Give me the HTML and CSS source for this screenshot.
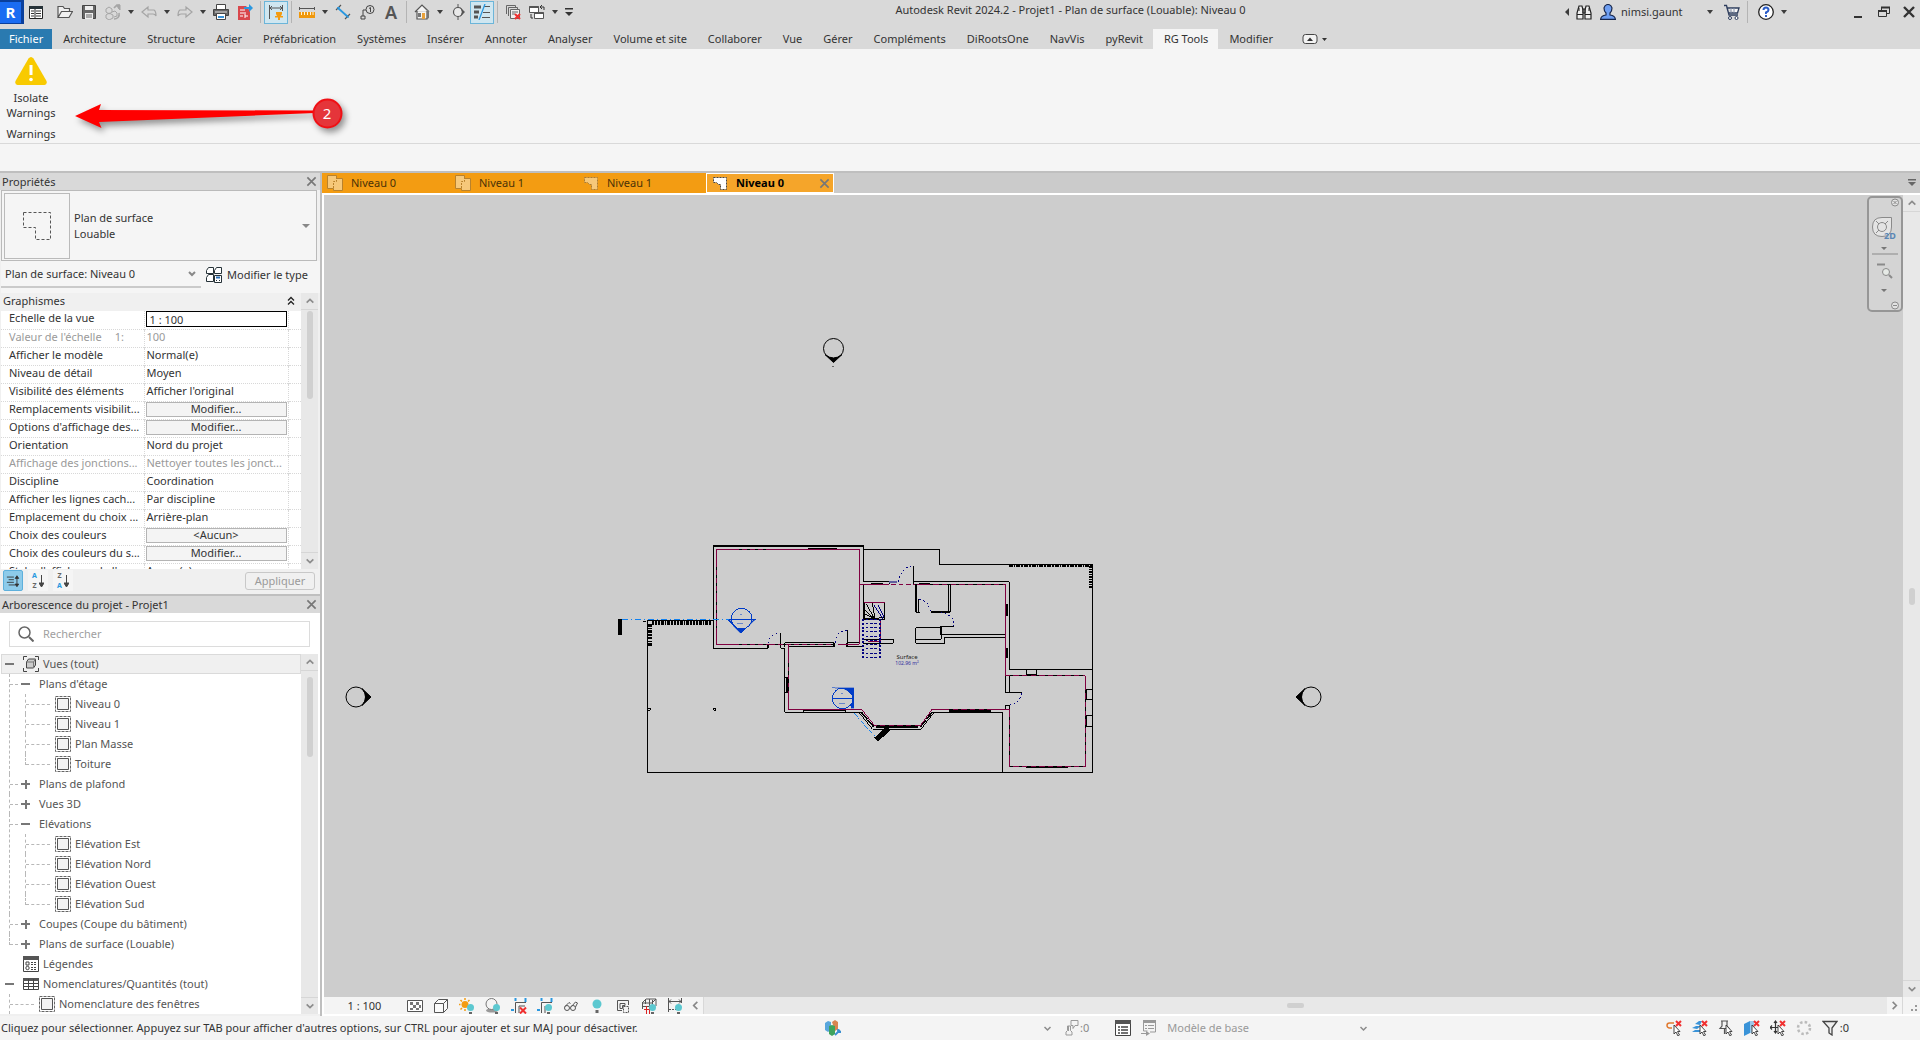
FILE: index.html
```html
<!DOCTYPE html>
<html lang="fr">
<head>
<meta charset="utf-8">
<title>Autodesk Revit 2024.2 - Projet1</title>
<link rel="stylesheet" href="styles.css">
</head>
<body>
<svg class="defs" aria-hidden="true">
  <symbol id="caret" viewBox="0 0 12 16"><path d="M3 6h6L6 10z" fill="#3c3c3c"/></symbol>
  <symbol id="x" viewBox="0 0 12 12"><path d="M1.500 1.500l9 9M10.500 1.500l-9 9" stroke="#777" stroke-width="1.800" fill="none"/></symbol>
  <symbol id="up" viewBox="0 0 12 12"><path d="M2 8l4-4 4 4" stroke="#8c8c8c" stroke-width="2" fill="none"/></symbol>
  <symbol id="down" viewBox="0 0 12 12"><path d="M2 4l4 4 4-4" stroke="#8c8c8c" stroke-width="2" fill="none"/></symbol>
  <symbol id="view" viewBox="0 0 16 16"><path d="M.5 .5h15v15H.5z" fill="none" stroke="#666" stroke-dasharray="3 1"/><path d="M2.500 2.500h11v11h-11z" fill="#f2f2f2" stroke="#555"/></symbol>
  <symbol id="bulb" viewBox="0 0 16 16"><circle cx="11.500" cy="9.500" r="3.500" fill="#5cc8d0"/><path d="M10 14h3v2h-3z" fill="#666"/></symbol>
  <symbol id="cursor" viewBox="0 0 16 16"><path d="M8 5v9l2-2 2 4 1.500-1-2-3.500H14z" fill="#fff" stroke="#333" stroke-width=".9"/></symbol>
  <symbol id="redx" viewBox="0 0 16 16"><path d="M10 1l5 5M15 1l-5 5" stroke="#f03030" stroke-width="2"/></symbol>
  <symbol id="sheet" viewBox="0 0 16 16"><path d="M.5 .5h9v3h6v12h-9v-2h-6z" fill="#f6c87a" stroke="#b9822c"/><path d="M6.500 13V6.500h3V3" fill="none" stroke="#b9822c" stroke-dasharray="2 1"/></symbol>
  <symbol id="area" viewBox="0 0 16 16"><path d="M1.500 2.500h13v12h-6v-5h-2l-2-2h-3z" stroke-dasharray="2 1"/></symbol>
</svg>

<header class="titlebar">
  <div class="tools">
    <button class="app" aria-label="Revit"><span>R</span></button>
    <button class="tool" aria-label="Accueil"><svg viewBox="0 0 16 16"><path d="M1.500 2.500h13v12h-13z" fill="#fff" stroke="#222"/><path d="M1 2h14v3H1z" fill="#263238"/><path d="M3 7h3M3 9.500h3M3 12h3M8 7h5M8 9.500h5M8 12h5" stroke="#333"/><path d="M7 5v9" stroke="#222"/></svg></button>
    <span class="space"></span>
    <button class="tool" aria-label="Ouvrir"><svg viewBox="0 0 16 16"><path d="M1 13.500v-11h5l1.500 2h5v3M1 13.500l3.500-6h11l-3.500 6z" fill="#f0f0f0" stroke="#555" stroke-width="1.200"/></svg></button>
    <button class="tool" aria-label="Enregistrer"><svg viewBox="0 0 16 16"><path d="M1.500 1.500h13v13h-13z" fill="#666" stroke="#444"/><path d="M4 2h8v4H4zM4 9h8v6H4z" fill="#eee"/><path d="M5 11h6M5 13h6" stroke="#666"/></svg></button>
    <button class="tool" aria-label="Synchroniser"><svg viewBox="0 0 16 16" fill="none" stroke="#a5a5a5"><path d="M1 5l3-2 3 2v3l-3 2-3-2zM1 11l3-2 4 2v3l-4 2-3-2zM7 8l3-1 2 2v3l-3 1"/><path d="M9 4c2-3 5-3 5-3v4M14 9c1 4-2 6-5 6" stroke-width="1.600"/><path d="M11 1h4v5z" fill="#a5a5a5"/></svg></button>
    <button class="drop" aria-label="Options de synchronisation"><svg><use href="#caret"/></svg></button>
    <button class="tool" aria-label="Annuler"><svg viewBox="0 0 16 16"><path d="M1 8l6-5v3h6q2 1 2 6-1-2-3-2H7v3z" fill="none" stroke="#a5a5a5" stroke-width="1.200"/></svg></button>
    <button class="drop" aria-label="Liste annuler"><svg><use href="#caret"/></svg></button>
    <button class="tool" aria-label="Rétablir"><svg viewBox="0 0 16 16"><path d="M15 8L9 3v3H3Q1 7 1 12q1-2 3-2h5v3z" fill="none" stroke="#a5a5a5" stroke-width="1.200"/></svg></button>
    <button class="drop" aria-label="Liste rétablir"><svg><use href="#caret"/></svg></button>
    <button class="tool" aria-label="Imprimer"><svg viewBox="0 0 16 16"><path d="M3.500 5V.5h9V5" fill="#fff" stroke="#444"/><path d="M.5 5.500h15v6H.5z" fill="#666" stroke="#444"/><path d="M3.500 9.500h9v6h-9z" fill="#fff" stroke="#444"/><path d="M2 8h12" stroke="#ddd"/><path d="M5 13h6" stroke="#3a93d8" stroke-width="2"/></svg></button>
    <button class="tool" aria-label="Exporter PDF"><svg viewBox="0 0 16 16"><path d="M1 2h8l4 5v9H1z" fill="#d9474c"/><path d="M3 6h5M3 9h6M3 12h3M8 12h3M8 10v4" stroke="#fff"/><path d="M7 3h5V0l4 4-4 4V5H7z" fill="#2a98e0"/></svg></button>
    <span class="sep"></span>
    <button class="tool on" aria-label="Cote alignée"><svg viewBox="0 0 16 16"><path d="M1.500 1v14M14.500 1v6M2 4h12M4 2L2 4l2 2M12 2l2 2-2 2" fill="none" stroke="#555"/><path d="M8 8h6v2l-1 2h2v1.500h-3V16h-2v-2.500H7V12h2l-1-2z" fill="#f39c12"/></svg></button>
    <span class="sep"></span>
    <button class="tool" aria-label="Mesurer"><svg viewBox="0 0 16 16"><path d="M.5 3v3M15.500 3v3M0 4.500h16" stroke="#555"/><path d="M0 8h16v6H0z" fill="#f0980c"/><path d="M2.500 8v3M5.500 8v3M8.500 8v3M11.500 8v3M14 8v3" stroke="#fff3d6"/></svg></button>
    <button class="drop" aria-label="Options de mesure"><svg><use href="#caret"/></svg></button>
    <button class="tool" aria-label="Cote"><svg viewBox="0 0 16 16"><path d="M3 4l10 9" stroke="#2a98e0" stroke-width="1.800"/><path d="M1 6l5-5M10 15l5-5" stroke="#555" stroke-width="1.200"/><path d="M2 3l3 0-2 3zM14 14l-3-1 2-2z" fill="#2a98e0"/></svg></button>
    <button class="tool" aria-label="Étiquette"><svg viewBox="0 0 16 16" fill="none" stroke="#444"><circle cx="11" cy="5.500" r="4"/><path d="M7 6H4v6M2 12h4v3H2zM10 4.500l1.500-1V8"/></svg></button>
    <button class="tool letter" aria-label="Texte">A</button>
    <span class="sep"></span>
    <button class="tool" aria-label="Vue 3D"><svg viewBox="0 0 16 16"><path d="M1 8l7-7 7 7M3 7v8h10V7" fill="#f4f4f4" stroke="#555" stroke-width="1.200"/><path d="M8 9h3v6H8z" fill="#e9a23b"/><path d="M4 9h3v4H4zM10 2l5 5v7l-2 1V6z" fill="#777"/></svg></button>
    <button class="drop" aria-label="Options 3D"><svg><use href="#caret"/></svg></button>
    <button class="tool" aria-label="Coupe"><svg viewBox="0 0 16 16"><circle cx="8" cy="8" r="4.500" fill="#e9e9e9" stroke="#555" stroke-width="1.200"/><path d="M8 0v4M8 12v4" stroke="#555"/><path d="M10 3l5 5-5 5 2-5z" fill="#555"/></svg></button>
    <button class="tool on" aria-label="Lignes fines"><svg viewBox="0 0 16 16"><path d="M0 3h7M0 8h5M0 13h4" stroke="#555" stroke-width="3"/><path d="M10 2.500h6M9 8.500h7M8 13.500h8" stroke="#555"/><path d="M11 0L5 16" stroke="#2a98e0" stroke-width="1.300"/></svg></button>
    <span class="sep"></span>
    <button class="tool" aria-label="Fermer les vues inactives"><svg viewBox="0 0 16 16"><path d="M1.500 10V1.500h9V3M3.500 12V3.500h9V5" fill="none" stroke="#666"/><path d="M5.500 5.500h9v9h-9z" fill="#f0f0f0" stroke="#666"/><path d="M7 8h6M7 10h3" stroke="#666"/><path d="M10 10l5 5M15 10l-5 5" stroke="#f03030" stroke-width="2"/></svg></button>
    <button class="tool" aria-label="Changer de fenêtre"><svg viewBox="0 0 16 16"><path d="M.5 2.500h9v6h-9z" fill="#fff" stroke="#555"/><path d="M.5 3h9" stroke="#555" stroke-width="2"/><path d="M5.500 8.500h9v6h-9z" fill="#fff" stroke="#555"/><path d="M5.500 9h9" stroke="#555" stroke-width="2"/><path d="M11 3h4v3M2 10v4h2M13 1l-2 2 2 2" fill="none" stroke="#333"/></svg></button>
    <button class="drop" aria-label="Liste des fenêtres"><svg><use href="#caret"/></svg></button>
    <button class="tool narrow" aria-label="Personnaliser"><svg viewBox="0 0 16 16"><path d="M4 4h8v1.500H4zM4 8h8l-4 4z" fill="#333"/></svg></button>
  </div>
  <div class="title">Autodesk Revit 2024.2 - Projet1 - Plan de surface (Louable): Niveau 0</div>
  <div class="account">
    <button class="drop" aria-label="Réduire"><svg viewBox="0 0 12 16"><path d="M9 4v8L5 8z" fill="#3c3c3c"/></svg></button>
    <button class="tool" aria-label="Rechercher"><svg viewBox="0 0 16 16"><path d="M3 2h3l1 4v9H1V9zM13 2h-3L9 6v9h6V9z" fill="#eee" stroke="#222" stroke-width="1.200"/><path d="M1 10.500h6M9 10.500h6M7 5h2v4H7zM3 4v3M13 4v3" fill="#888" stroke="#222"/></svg></button>
    <button class="user"><svg viewBox="0 0 16 16"><path d="M.6 15.400Q1 11.500 6 11V9Q4 7 4 4q1-3.500 4-3.500T12 4q0 3-2 5v2q5 .5 5.400 4.400z" fill="#6f9ff2" stroke="#16264c" stroke-width="1.200"/></svg>nimsi.gaunt</button>
    <button class="drop" aria-label="Compte"><svg><use href="#caret"/></svg></button>
    <button class="tool cart" aria-label="Boutique"><svg viewBox="0 0 16 16"><path d="M0 1.500h2.500L5 11h9M3 4h12l-1.500 5H4.500z" fill="#f6f6f6" stroke="#2d3c5c" stroke-width="1.300"/><path d="M7 4v5M10 4v5" stroke="#8390aa"/><circle cx="6" cy="14" r="1.500" fill="#fff" stroke="#2d3c5c"/><circle cx="12.500" cy="14" r="1.500" fill="#fff" stroke="#2d3c5c"/></svg></button>
    <span class="sep"></span>
    <button class="tool help" aria-label="Aide"><svg viewBox="0 0 16 16"><circle cx="8" cy="8" r="7.300" fill="#fff" stroke="#222" stroke-width="1.300"/><path d="M5.500 6q0-2.500 2.500-2.500T10.500 6Q10.500 7.500 8 8.500v1.500M8 11v2" fill="none" stroke="#2a5cc8" stroke-width="2"/></svg></button>
    <button class="drop" aria-label="Menu aide"><svg><use href="#caret"/></svg></button>
  </div>
  <div class="winbtns">
    <button aria-label="Réduire"><svg viewBox="0 0 12 12"><path d="M1 10h8v2H1z" fill="#333"/></svg></button>
    <button aria-label="Restaurer"><svg viewBox="0 0 12 12"><path d="M3.500 4V1.500h8v6H9M.5 4.500h8v6h-8z" fill="none" stroke="#333"/><path d="M3 1.500h9M0 5h9" stroke="#333" stroke-width="2"/></svg></button>
    <button aria-label="Fermer"><svg viewBox="0 0 12 12"><path d="M1 1l10 10M11 1L1 11" stroke="#333" stroke-width="2.400"/></svg></button>
  </div>
</header>

<nav class="menu">
  <button class="file">Fichier</button><button>Architecture</button><button>Structure</button><button>Acier</button><button>Préfabrication</button><button>Systèmes</button><button>Insérer</button><button>Annoter</button><button>Analyser</button><button>Volume et site</button><button>Collaborer</button><button>Vue</button><button>Gérer</button><button>Compléments</button><button>DiRootsOne</button><button>NavVis</button><button>pyRevit</button><button class="current">RG Tools</button><button>Modifier</button>
  <button class="collapse" aria-label="Réduire le ruban"><svg viewBox="0 0 26 12"><rect x="1" y="1.500" width="14" height="9" rx="2.500" fill="#f2f2f2" stroke="#444"/><path d="M5 8h6L8 4.500zM20 5h5l-2.500 3z" fill="#333"/></svg></button>
</nav>

<section class="ribbon">
  <div class="panel">
    <button class="big"><svg viewBox="0 0 32 28"><path d="M13.500 1.500q2.500-3 5 0L31.500 24q1 3.500-2 4h-27q-3-.5-2-4z" fill="#f8ca00"/><path d="M16 8v10" stroke="#fff" stroke-width="3"/><circle cx="16" cy="22.500" r="1.800" fill="#fff"/></svg><span>Isolate<br>Warnings</span></button>
    <div class="caption">Warnings</div>
  </div>
  <svg class="callout" viewBox="0 0 290 50"><g filter="drop-shadow(3px 4px 3px #0006)"><path d="M5 27L31 15l-2 6 216 .5v2.500L29 33l2.500 6z" fill="#f00"/><circle cx="257.500" cy="24.500" r="14" fill="#e5353a" stroke="#f01015" stroke-width="2"/></g><text x="257" y="30">2</text></svg>
</section>
<div class="options"></div>

<main>
  <aside>
    <section class="props">
      <header class="dockhead"><h2>Propriétés</h2><button aria-label="Fermer Propriétés"><svg><use href="#x"/></svg></button></header>
      <button class="type">
        <span class="thumb"><svg viewBox="0 0 30 30"><path d="M1.500 1.500h27v27h-15v-12h-12z" fill="none" stroke="#555" stroke-dasharray="3 2"/></svg></span>
        <span class="typename">Plan de surface<br>Louable</span>
        <svg class="tri" viewBox="0 0 8 4"><path d="M0 0h8L4 4z" fill="#888"/></svg>
      </button>
      <div class="filter">
        <button class="instance"><span>Plan de surface: Niveau 0</span><svg viewBox="0 0 12 12"><path d="M3 4l3 3 3-3" fill="none" stroke="#888" stroke-width="2"/></svg></button>
        <button class="edit"><svg viewBox="0 0 16 16" fill="#fff" stroke="#263238"><path d="M.5 3.500l2-3h5v6h-7zM8.500 3.500l2-3h5v6h-7zM.5 10.500l2-3h5v7h-7z"/><path d="M8.500 8.500h7v7h-7z"/><path d="M10 10.500h4" stroke="#2a6fb5" stroke-width="2"/><path d="M10 13.500h1M13 13.500h1"/></svg>Modifier le type</button>
      </div>
      <div class="scrollrow grid">
        <div class="clip">
          <div class="group"><span>Graphismes</span><svg viewBox="0 0 8 10"><path d="M1 4.500l3-3 3 3M1 8.500l3-3 3 3" fill="none" stroke="#222" stroke-width="1.300"/></svg></div>
          <table>
            <tr><th><label for="scale">Echelle de la vue</label></th><td class="field"><input id="scale" value="1 : 100"></td><td></td></tr>
            <tr class="off"><th>Valeur de l'échelle<span class="unit">1:</span></th><td>100</td><td></td></tr>
            <tr><th>Afficher le modèle</th><td>Normal(e)</td><td></td></tr>
            <tr><th>Niveau de détail</th><td>Moyen</td><td></td></tr>
            <tr><th>Visibilité des éléments</th><td>Afficher l'original</td><td></td></tr>
            <tr><th>Remplacements visibilit...</th><td class="field"><button>Modifier...</button></td><td></td></tr>
            <tr><th>Options d'affichage des...</th><td class="field"><button>Modifier...</button></td><td></td></tr>
            <tr><th>Orientation</th><td>Nord du projet</td><td></td></tr>
            <tr class="off"><th>Affichage des jonctions...</th><td>Nettoyer toutes les jonct...</td><td></td></tr>
            <tr><th>Discipline</th><td>Coordination</td><td></td></tr>
            <tr><th>Afficher les lignes cach...</th><td>Par discipline</td><td></td></tr>
            <tr><th>Emplacement du choix ...</th><td>Arrière-plan</td><td></td></tr>
            <tr><th>Choix des couleurs</th><td class="field"><button>&lt;Aucun&gt;</button></td><td></td></tr>
            <tr><th>Choix des couleurs du s...</th><td class="field"><button>Modifier...</button></td><td></td></tr>
            <tr><th>Style d'affichage de l'...</th><td>Aucun(e)</td><td></td></tr>
          </table>
        </div>
        <div class="vbar"><button aria-label="Haut"><svg><use href="#up"/></svg></button><i class="t1"></i><button aria-label="Bas"><svg><use href="#down"/></svg></button></div>
      </div>
      <div class="sorts">
        <button class="sel" aria-label="Trier par catégorie"><svg viewBox="0 0 16 16"><path d="M1 3.500h8M3 6.500h6M1 9.500h8M3 12.500h8" stroke="#333"/><path d="M12.500 4v9M10.500 5l2-3 2 3zM10.500 11.500l2 3 2-3z" fill="#333" stroke="#333"/></svg></button>
        <button aria-label="Tri croissant"><span class="az"><b>A</b><b>Z</b></span><svg viewBox="0 0 5 14"><path d="M2.500 1v10M0 9h5L2.500 13z" fill="#444" stroke="#444"/></svg></button>
        <button aria-label="Tri décroissant"><span class="az za"><b>Z</b><b>A</b></span><svg viewBox="0 0 5 14"><path d="M2.500 1v10M0 9h5L2.500 13z" fill="#444" stroke="#444"/></svg></button>
        <button class="apply" disabled>Appliquer</button>
      </div>
    </section>

    <section class="browser">
      <header class="dockhead"><h2>Arborescence du projet - Projet1</h2><button aria-label="Fermer Arborescence"><svg><use href="#x"/></svg></button></header>
      <label class="search"><svg viewBox="0 0 16 16"><circle cx="6.500" cy="6.500" r="5.500" fill="none" stroke="#666" stroke-width="1.500"/><path d="M11 11l4.500 4.500" stroke="#666" stroke-width="2"/></svg><input placeholder="Rechercher" aria-label="Rechercher"></label>
      <div class="scrollrow">
        <div class="clip">
          <ul class="tree">
            <li><div class="row root hot"><i class="tg minus"></i><svg viewBox="0 0 16 16" fill="none" stroke="#444"><path d="M4 .5H.5V4M12 .5h3.500V4M4 15.500H.5V12M12 15.500h3.500V12"/><path d="M3.500 6l2-3h7v6l-2 3h-7z" fill="#ccc"/><path d="M3.500 6h7v6M10.500 6l2-3" stroke="#777"/></svg>Vues (tout)</div>
              <ul>
                <li><div class="row"><i class="tg minus"></i>Plans d'étage</div>
                  <ul class="leafs">
                    <li><div class="row"><svg><use href="#view"/></svg>Niveau 0</div></li>
                    <li><div class="row"><svg><use href="#view"/></svg>Niveau 1</div></li>
                    <li><div class="row"><svg><use href="#view"/></svg>Plan Masse</div></li>
                    <li><div class="row"><svg><use href="#view"/></svg>Toiture</div></li>
                  </ul></li>
                <li><div class="row"><i class="tg plus"></i>Plans de plafond</div></li>
                <li><div class="row"><i class="tg plus"></i>Vues 3D</div></li>
                <li><div class="row"><i class="tg minus"></i>Elévations</div>
                  <ul class="leafs">
                    <li><div class="row"><svg><use href="#view"/></svg>Elévation Est</div></li>
                    <li><div class="row"><svg><use href="#view"/></svg>Elévation Nord</div></li>
                    <li><div class="row"><svg><use href="#view"/></svg>Elévation Ouest</div></li>
                    <li><div class="row"><svg><use href="#view"/></svg>Elévation Sud</div></li>
                  </ul></li>
                <li><div class="row"><i class="tg plus"></i>Coupes (Coupe du bâtiment)</div></li>
                <li><div class="row"><i class="tg plus"></i>Plans de surface (Louable)</div></li>
              </ul></li>
            <li><div class="row root"><i class="tg"></i><svg viewBox="0 0 16 16"><path d="M.5 .5h15v15H.5z" fill="#fff" stroke="#444"/><path d="M0 0h16v4H0z" fill="#555"/><path d="M3 6h3v3H3z" fill="none" stroke="#444"/><circle cx="4.500" cy="12" r="1.700" fill="none" stroke="#444"/><path d="M8 6.500h6M8 8.500h6M8 11.500h6M8 13.500h6" stroke="#444" stroke-dasharray="2 1"/></svg>Légendes</div></li>
            <li><div class="row root"><i class="tg minus"></i><svg viewBox="0 0 16 16"><path d="M.5 2.500h15v11H.5z" fill="#fff" stroke="#444"/><path d="M0 2h16v3H0z" fill="#555"/><path d="M0 7.500h16M0 10.500h16M5.500 3v11M10.500 3v11" stroke="#444"/></svg>Nomenclatures/Quantités (tout)</div>
              <ul class="leafs near"><li><div class="row"><svg><use href="#view"/></svg>Nomenclature des fenêtres</div></li><li><div class="row"></div></li></ul></li>
          </ul>
        </div>
        <div class="vbar"><button aria-label="Haut"><svg><use href="#up"/></svg></button><i class="t2"></i><button aria-label="Bas"><svg><use href="#down"/></svg></button></div>
      </div>
    </section>
  </aside>

  <section class="work">
    <div class="docs">
      <button class="doc"><svg><use href="#sheet"/></svg>Niveau 0</button>
      <button class="doc"><svg><use href="#sheet"/></svg>Niveau 1</button>
      <button class="doc dim"><svg fill="#f6c87a" stroke="#a87a35"><use href="#area"/></svg>Niveau 1</button>
      <button class="doc active"><svg fill="#fff" stroke="#444"><use href="#area"/></svg>Niveau 0<svg class="cl"><use href="#x"/></svg></button>
      <button class="more" aria-label="Liste des onglets"><svg viewBox="0 0 8 8"><path d="M0 0h8v1.500H0zM0 3h8L4 7z" fill="#666"/></svg></button>
    </div>
    <div class="viewport">
      <div class="canvas">
        <svg class="plan" viewBox="324 195 1579 802" preserveAspectRatio="xMinYMin slice" fill="none" stroke="#000" shape-rendering="crispEdges">
          <g shape-rendering="auto">
            <circle cx="833.500" cy="348.500" r="10"/><path d="M825 354.500l8.500 8 8.500-8q-8.500 7-17 0z" fill="#000"/><path d="M833 366v1"/>
            <circle cx="356" cy="697" r="10"/><path d="M362 688.500l9 8.500-9 8.500q7-8.500 0-17z" fill="#000"/>
            <circle cx="1311" cy="697" r="10"/><path d="M1305 688.500l-9 8.500 9 8.500q-7-8.500 0-17z" fill="#000"/>
          </g>
          <g transform="translate(600 530) scale(.333333)" stroke-width="3">
            <path d="M340 47v308h165v-12M340 47h450v107" />
            <path d="M340 47h452" stroke-width="6"/>
            <path d="M624 57h87" stroke-width="6"/>
            <path d="M60 267v48" stroke-width="12"/>
            <path d="M142 271h198M142 271v456h1336M130 276h8v-4"/>
            <path d="M156 278h177" stroke-width="12" stroke-dasharray="5 3 8 3"/>
            <path d="M150 282v68" stroke-width="12" stroke-dasharray="8 4 4 3"/>
            <path d="M142 535h9v6h-9M341 535h7v6h-7z"/>
            <path d="M542 308v47h12v192h223M554 350v-12h149v11H566M742 300v49h48M742 338h37"/>
            <path d="M505 343v12M542 343v12M703 338v12M741 338v12" stroke-width="5"/>
            <path d="M554 442h8v46h-8M612 541h125v6H612z"/><path d="M562 442v46" stroke-width="6"/>
            <path d="M612 541h125" stroke-width="5"/>
            <path d="M349 58v285h210M349 58h429v285H714M565 343h138M565 343v195h218M565 343h-40" stroke="#800040"/>
            <path d="M349 110v80M349 215v80M778 110v80M778 215v80M416 58h90M416 343h90M565 400v90M525 343h178" stroke-dasharray="10 14"/>
            <g stroke="#003cc8"><circle cx="425" cy="266" r="31"/><path d="M378 268h90"/><path d="M382 269l40 41 44-41-11 5q-10 22-31 24-22-1-29-24zM697 473h65v62h-8v-12q10-18 0-30-17-20-40-18z" fill="#003cc8" stroke-width="1"/><circle cx="728" cy="505" r="31"/><path d="M697 505h62"/><path d="M420 253h6M411 281h18M723 490h6M717 520h18" stroke-opacity=".5"/></g>
            <path d="M66 268h320M763 549l16 17M792 584l24 25" stroke="#1080f0" stroke-dasharray="18 9 3 9"/>
            <path d="M505 340q3-27 36-33M705 338q3-36 36-37" stroke="#000080" stroke-dasharray="5 8"/>
          </g>
          <g transform="translate(850 530) scale(.333333)" stroke-width="3">
            <path d="M40 58h228v45h459v624M40 47v107h78v8M190 107v54M190 155h288v263h249M457 547v180M41 165v52"/>
            <path d="M476 107h252" stroke-width="7" stroke-dasharray="12 3 5 3"/><path d="M722 107v70" stroke-width="10" stroke-dasharray="6 3 3 3"/>
            <path d="M198 163v84h12M206 208v38M296 163v84M301 163v84M302 313h164M271 248h30"/>
            <path d="M198 163v84M243 246h58M64 161h34M207 161h33" stroke-width="6"/>
            <path d="M197 293h77v35h-77M197 293v47h87v-18h182M274 313h28M271 290h42M271 290v23"/>
            <path d="M197 293h77M197 293v35M274 290v25" stroke-width="5"/>
            <path d="M472 223v36M472 355v30" stroke-width="7"/><path d="M478 223v36M478 355v30M478 437v50h-12v-50M472 487h43M466 538v-12h12v12M529 419v14h31v-14M727 478h-18v30h18M727 556h-18v33h18"/>
            <path d="M252 547h206M0 547h27l41 51h145l39-51M298 541h124v5H298z"/>
            <path d="M78 591h125" stroke-width="8"/><path d="M33 546l38 44M247 546l-36 44" stroke-dasharray="28 4" stroke-width="5"/>
            <path d="M78 629l38-34" stroke-width="16"/>
            <path d="M529 711h125" stroke-width="5"/>
            <path d="M0 58h28v285H0M28 163h90M202 163h264v275M466 437h240v273H479V538H246l-34 48H73l-38-48H0M40 217h64v51M91 268v66H55" stroke="#800040"/>
            <path d="M124 163h70" stroke="#800040" stroke-dasharray="14 8"/>
            <path d="M118 157h22" stroke="#6060a0" stroke-width="6"/>
            <path d="M240 163h220M480 437h220M706 480v200M479 560v130M298 538h124M480 710h220M80 586h125" stroke-dasharray="10 16"/>
            <path d="M40 217v51h64v-48M40 265h34l28-2M72 265l-30-28M72 265l-30-14M72 265l-22-43M75 265l-8-45M40 328h90v12H40M66 268v-5"/><path d="M42 220v48" stroke-width="5"/>
            <path d="M72 226l27 40M84 224l19 38" stroke="#000080"/>
            <path d="M145 155q8-42 45-49M208 208q28 4 34 38M272 248q42 6 39 40M479 524q34-5 35-36" stroke="#000080" stroke-dasharray="5 7"/>
            <path d="M40 268v116M91 268v116" stroke="#000080" stroke-width="7" stroke-dasharray="6 5"/>
            <path d="M47 270h42M47 281h42M47 293h42M47 306h42M47 319h42M47 333h42M47 345h42M47 357h42M47 370h42M47 382h42" stroke="#000080" stroke-dasharray="8 5"/>
            <path d="M12 549l66 74" stroke="#1080f0" stroke-dasharray="12 10 3 9"/>
          </g>
          <text x="907" y="659">Surface</text><text class="m2" x="907" y="665">102.96 m²</text>
        </svg>
        <div class="navbar">
          <svg viewBox="0 0 36 116">
            <rect x="1" y="1" width="34" height="114" rx="4" fill="#d4d4d4" stroke="#969696" stroke-width="2"/>
            <g fill="none" stroke="#8a8a8a"><circle cx="28" cy="6.500" r="3.500" fill="#e2e2e2"/><path d="M26.500 5l3 3M29.500 5l-3 3"/><circle cx="28" cy="109.500" r="3.500" fill="#e2e2e2"/><path d="M26 109.500h4"/><path d="M15 21.500h9.500V31q0 9.500-9.500 9.500T5.500 31 15 21.500z" fill="#e4e4e4"/><circle cx="15" cy="31" r="4.500"/><path d="M9 37l3-3M18 28l3-3M9 25l3 3M5 58h26"/><path d="M10 68.500h8" stroke-width="2"/><circle cx="19" cy="76" r="3.500" fill="#e6eae6"/><path d="M22 79l3 3" stroke-width="2"/></g>
            <path d="M14 51h6l-3 3zM14 93h6l-3 3z" fill="#777"/>
            <text x="17" y="43">2D</text>
          </svg>
        </div>
      </div>
      <div class="vbar"><button aria-label="Haut"><svg><use href="#up"/></svg></button><i class="t3"></i><button aria-label="Bas"><svg><use href="#down"/></svg></button></div>
    </div>
    <div class="viewbar">
      <button class="ratio">1 : 100</button>
      <div class="viewicons">
        <button aria-label="Niveau de détail"><svg viewBox="0 0 16 16"><path d="M.5 2.500h15v11H.5z" fill="#fff" stroke="#555"/><path d="M3 4h3v3H3zM9 4h3v3H9zM6 7h3v3H6zM12 7h2v3h-2zM3 10h3v2H3zM9 10h3v2H9z" fill="#777"/></svg></button>
        <button aria-label="Style visuel"><svg viewBox="0 0 16 16"><path d="M1.500 5.500h9v9h-9zM1.500 5.500l4-4h9v9l-4 4M10.500 5.500l4-4" fill="#fafafa" stroke="#555"/></svg></button>
        <button aria-label="Soleil"><svg viewBox="0 0 16 16"><circle cx="6" cy="6.500" r="3.500" fill="#f39c12"/><path d="M6 0v2M6 11v2M0 6.500h1.500M1.500 2l1.500 1.500M10.500 2L9 3.500M1.500 11.500L3 10" stroke="#f39c12" stroke-width="1.500"/><use href="#bulb"/></svg></button>
        <button aria-label="Ombres"><svg viewBox="0 0 16 16"><ellipse cx="7" cy="12.500" rx="6" ry="2" fill="#999"/><circle cx="6.500" cy="6" r="5.500" fill="#f4f4f4" stroke="#777"/><use href="#bulb"/></svg></button>
        <button aria-label="Cadrage"><svg viewBox="0 0 16 16"><path d="M4.500 15V4.500H15M8 15V8h6" fill="none" stroke="#555"/><path d="M0 12h3M4.500 0v3M14.500 0v4" stroke="#2a98e0" stroke-width="2"/><path d="M9 9.500l6 6M15 9.500l-6 6" stroke="#f03030" stroke-width="2"/></svg></button>
        <button aria-label="Zone cadrée"><svg viewBox="0 0 16 16"><path d="M4.500 15V4.500H15M8 15V8" fill="none" stroke="#555"/><path d="M0 12h3M4.500 0v3M14.500 0v4" stroke="#2a98e0" stroke-width="2"/><use href="#bulb"/></svg></button>
        <button aria-label="Masquer temporairement"><svg viewBox="0 0 16 16" fill="none" stroke="#555"><circle cx="4" cy="10" r="2.500"/><circle cx="10" cy="10" r="2.500"/><path d="M2 8.500l4-4 1.500 1M12.500 9l2-4-2-1-4 4.500"/></svg></button>
        <button aria-label="Éléments cachés"><svg viewBox="0 0 16 16"><circle cx="8" cy="6" r="4.500" fill="#5cc8d0"/><path d="M6.500 12h3v3h-3z" fill="#666"/></svg></button>
        <button aria-label="Propriétés temporaires"><svg viewBox="0 0 16 16" fill="none" stroke="#555"><path d="M13.500 7V2.500h-11v10H7"/><path d="M5 5.500h5v2H7.500v3H5z"/><path d="M8.500 8.500h5v6h-5z" stroke-dasharray="2 1"/></svg></button>
        <button aria-label="Modèle analytique"><svg viewBox="0 0 16 16"><path d="M1 5l4-4h10v7M1 5h10l4-4M1.500 5v6M4.500 1v5M8.500 1v7M11.500 2v5M2 8.500h8" fill="none" stroke="#555"/><path d="M5.500 8v8M8.500 8v8M3 11.500h6" stroke="#d22"/><use href="#bulb"/></svg></button>
        <button aria-label="Contraintes"><svg viewBox="0 0 16 16"><path d="M1.500 0v14M14.500 0v5M2 3.500h12M4 1.500l-2 2 2 2M12 1.500l2 2-2 2" fill="none" stroke="#555"/><path d="M2 11.500h8" stroke="#555" stroke-dasharray="2 1"/><use href="#bulb"/></svg></button>
      </div>
      <button class="arrow" aria-label="Gauche"><svg viewBox="0 0 12 12"><path d="M8 2L4 6l4 4" fill="none" stroke="#888" stroke-width="1.800"/></svg></button>
      <div class="track"><i></i></div>
      <button class="arrow" aria-label="Droite"><svg viewBox="0 0 12 12"><path d="M4 2l4 4-4 4" fill="none" stroke="#888" stroke-width="1.800"/></svg></button>
      <svg class="grip" viewBox="0 0 17 17"><path d="M12 8h2v2h-2zM12 12h2v2h-2zM8 12h2v2H8z" fill="#999"/></svg>
    </div>
  </section>
</main>

<footer>
  <span class="msg">Cliquez pour sélectionner. Appuyez sur TAB pour afficher d'autres options, sur CTRL pour ajouter et sur MAJ pour désactiver.</span>
  <button class="sets" aria-label="Sous-projets"><svg viewBox="0 0 16 16"><path d="M0 3l3-2 3 1v8l-3 2-3-2z" fill="#58a6dc"/><path d="M7 2l3-2 3 2v7l-3 2z" fill="#d98450"/><path d="M4 6l3-1 3 1v8l-3 2-3-2z" fill="#3fa35c"/><path d="M10 15l5-5M13 9v3h3" fill="none" stroke="#3a8fd0" stroke-width="1.800"/></svg></button>
  <button class="chev" aria-label="Sous-projet actif"><svg><use href="#down"/></svg></button>
  <button class="req"><svg viewBox="0 0 16 16" fill="none" stroke="#999"><path d="M8 .5h7v5h-3l-2 3v-3H8zM5.500 6v5M3 15V12l1.500-1.500V6h3v4.500L9 12v3z"/></svg>:0</button>
  <button class="opt" aria-label="Variantes"><svg viewBox="0 0 16 16"><path d="M.5 .5h15v15H.5z" fill="#fff" stroke="#444"/><path d="M0 0h16v4H0z" fill="#555"/><path d="M3 7h2M3 10h2M3 13h2M6 7h7M6 10h7M6 13h7" stroke="#444" stroke-width="1.300"/></svg></button>
  <button class="opt" aria-label="Ajouter à la variante"><svg viewBox="0 0 16 16"><path d="M2.500 1v10h4M14.500 1v11H9" fill="none" stroke="#999"/><path d="M2 0h13v3H2z" fill="#999"/><path d="M4 5.500h2M4 8.500h2M7 5.500h6M7 8.500h6" stroke="#999"/><path d="M0 13h5v-2l4 2.500-4 2.500v-2H0z" fill="#999"/></svg></button>
  <button class="model"><span>Modèle de base</span><svg><use href="#down"/></svg></button>
  <div class="filters">
    <button aria-label="Sélectionner les liens"><svg viewBox="0 0 16 16"><path d="M6 8H3.500a2.500 2.500 0 010-5H8" fill="none" stroke="#e07a30" stroke-width="1.500"/><use href="#cursor"/><use href="#redx"/></svg></button>
    <button aria-label="Sélectionner fonds"><svg viewBox="0 0 16 16"><path d="M0 8l4-2h5L5 9zM3 4l4-3h3L8 5zM0 12l3-2h5v2z" fill="#3a93d8"/><use href="#cursor"/><use href="#redx"/></svg></button>
    <button aria-label="Sélectionner verrouillés"><svg viewBox="0 0 16 16"><path d="M3 1h7M4 1v5L2 8.500h9L9 6V1M6.500 9v5" fill="none" stroke="#555" stroke-width="1.200"/><use href="#cursor"/></svg></button>
    <button aria-label="Sélectionner par face"><svg viewBox="0 0 16 16"><path d="M0 4l6-3v12l-6 3z" fill="#3a93d8"/><path d="M6 1h4v12H6z" fill="#9bc9ea"/><use href="#cursor"/><use href="#redx"/></svg></button>
    <button aria-label="Glisser"><svg viewBox="0 0 16 16"><path d="M0 7.500h10M5.500 1v12M4 3l1.500-2L7 3M4 11l1.500 2L7 11M2 5.500l-2 2 2 2" fill="none" stroke="#333" stroke-width="1.200"/><use href="#cursor"/><use href="#redx"/></svg></button>
    <button aria-label="Processus"><svg viewBox="0 0 16 16"><circle cx="8" cy="8" r="6" fill="none" stroke="#bbb" stroke-width="2.500" stroke-dasharray="2.500 2.200"/></svg></button>
    <button class="count"><svg viewBox="0 0 16 16"><path d="M1 1.500h14L10 8v7l-3-2V8z" fill="#eee" stroke="#444" stroke-width="1.300"/></svg>:0</button>
  </div>
</footer>
</body>
</html>
```
FILE: styles.css
```css
* { box-sizing: border-box; }
html, body { height: 100%; margin: 0; overflow: hidden; }
body {
  display: flex; flex-direction: column;
  font: 11px/16px "Noto Sans", "Open Sans", sans-serif; color: #333; background: #f4f4f4;
}
button { display: flex; align-items: center; justify-content: center; padding: 0; margin: 0; border: 0; background: none; font: inherit; color: inherit; white-space: nowrap; }
input { font: inherit; color: inherit; border: 0; padding: 0; margin: 0; background: none; min-width: 0; }
svg { display: block; flex: none; }
h2 { margin: 0; font: inherit; }
ul { list-style: none; margin: 0; padding: 0; }
.defs { position: absolute; width: 0; height: 0; }

/* title bar */
.titlebar { display: flex; height: 29px; flex: none; background: #d9d9d9; }
.tools, .account, .winbtns { display: flex; align-items: center; height: 24px; flex: none; }
.tool { width: 24px; height: 23px; }
.tool svg { width: 16px; height: 16px; }
.tool.narrow { margin-left: -4px; }
.tool.on { background: #cfe6f0; border: 1px solid #6cb5d9; }
.letter { font-size: 18px; font-weight: 600; color: #555; }
.drop { width: 12px; height: 16px; }
.drop svg { width: 12px; height: 16px; }
.space { width: 5px; }
.sep { width: 7px; height: 22px; background: linear-gradient(#b4b4b4, #b4b4b4) center / 1px 100% no-repeat; }
.app { width: 24px; height: 24px; background: #0a3f9c; align-items: flex-start; justify-content: flex-start; }
.app span { width: 21px; height: 21px; margin-top: 2px; background: #1a6cf2; color: #fff; font-size: 15px; line-height: 21px; font-weight: 700; }
.title { flex: 1; text-align: center; line-height: 20px; }
.account { width: 240px; }
.user { gap: 5px; margin: 0 22px 0 4px; }
.user svg { width: 16px; height: 16px; }
.cart { margin-left: 4px; }
.help { margin-left: 3px; }
.winbtns { width: 120px; justify-content: flex-end; gap: 13px; padding-right: 5px; }
.winbtns svg { width: 12px; height: 12px; }

/* menu */
.menu { display: flex; height: 20px; flex: none; background: #d9d9d9; }
.menu button { padding: 0 10px 0 11px; height: 20px; }
.menu .file { background: #2a7ab0; color: #fff; padding: 0 9px; }
.menu .current { background: #f5f5f5; }
.menu .collapse { margin-left: 8px; }
.collapse svg { width: 26px; height: 12px; }

/* ribbon */
.ribbon { position: relative; height: 95px; flex: none; border-bottom: 1px solid #d9d9d9; background: #f5f5f5; }
.panel { width: 62px; padding-top: 8px; text-align: center; }
.big { flex-direction: column; width: 62px; gap: 5px; line-height: 15px; }
.big svg { width: 32px; height: 28px; }
.caption { padding-top: 6px; }
.callout { position: absolute; left: 70px; top: 40px; width: 290px; height: 50px; overflow: visible; }
.callout text { font-size: 15px; fill: #fff; text-anchor: middle; }
.options { height: 27px; flex: none; background: #f5f5f5; }

/* docks */
main { flex: 1; display: flex; min-height: 0; border-top: 2px solid #bfbfbf; overflow: hidden; }
aside { width: 322px; flex: none; display: flex; flex-direction: column; border-right: 2px solid #bfbfbf; background: #f0f0f0; }
.props { flex: 0 0 421px; display: flex; flex-direction: column; min-height: 0; padding-left: 1px; }
.dockhead { display: flex; align-items: center; justify-content: space-between; height: 17px; flex: none; margin-left: -1px; padding: 0 3px 0 2px; background: #d9d9d9; }
.dockhead svg { width: 11px; height: 11px; }
.type { width: 316px; height: 71px; flex: none; justify-content: flex-start; padding: 0 6px 0 2px; border: 1px solid #bababa; background: #f5f5f5; text-align: left; }
.thumb { display: flex; align-items: center; justify-content: center; width: 66px; height: 66px; border: 1px solid #bababa; }
.thumb svg { width: 30px; height: 30px; }
.typename { flex: 1; padding-left: 4px; }
.tri { width: 8px; height: 4px; }
.filter { display: flex; flex: none; height: 32px; padding-top: 1px; background: #f5f5f5; }
.instance { width: 200px; height: 26px; justify-content: space-between; padding: 0 3px 0 4px; border-bottom: 2px solid #cacaca; }
.instance svg { width: 12px; height: 12px; }
.edit { gap: 5px; height: 26px; margin-left: 5px; }
.edit svg { width: 16px; height: 16px; }
.scrollrow { flex: 1; display: flex; min-height: 0; margin-right: 2px; background: #fff; }
.clip { flex: 1; overflow: hidden; min-width: 0; }
.group { display: flex; justify-content: space-between; align-items: center; height: 18px; padding: 0 6px 2px 2px; background: #f0f0f0; }
.group svg { width: 8px; height: 10px; }
table { width: 100%; border-collapse: collapse; table-layout: fixed; }
tr { height: 18px; border-bottom: 1px dotted #d8d8d8; }
th, td { height: 18px; padding: 0 0 0 2px; line-height: 14px; font-weight: 400; text-align: left; vertical-align: top; white-space: nowrap; overflow: hidden; }
th { width: 143px; padding-left: 8px; }
td { border-left: 1px dotted #d8d8d8; }
td:last-child { width: 13px; }
td.field { padding: 0 1px; }
td button { width: 100%; height: 15px; border: 1px solid #b4b4b4; background: #f4f4f4; }
td input { display: block; width: 100%; height: 16px; padding-left: 3px; border: 1px solid #000; background: #fff; }
.off { color: #9a9a9a; }
.unit { margin-left: 13px; }
.vbar { width: 17px; flex: none; display: flex; flex-direction: column; justify-content: space-between; align-items: center; background: #e8e8e8; }
.vbar button { width: 17px; height: 17px; }
.vbar button:first-child { border-bottom: 1px solid #d6d6d6; }
.vbar button:last-child { border-top: 1px solid #d6d6d6; }
.vbar svg { width: 10px; height: 10px; }
.vbar i { width: 6px; border-radius: 3px; background: #d0d0d0; }
.t1 { height: 88px; margin: 1px 0 auto; }
.t2 { height: 80px; margin: 6px 0 auto; }
.t3 { height: 17px; }
.sorts { display: flex; align-items: center; gap: 5px; height: 25px; flex: none; padding: 0 5px 2px 2px; background: #f0f0f0; }
.sorts button { width: 20px; height: 21px; gap: 2px; background: #f5f5f5; }
.sorts .sel { background: #8dcbea; border: 1px solid #5eb0dc; border-radius: 2px; }
.sorts .sel svg { width: 14px; height: 14px; }
.sorts button svg { width: 5px; height: 14px; }
.az { display: flex; flex-direction: column; font-size: 7px; line-height: 10px; color: #666; }
.az b:first-child, .za b:last-child { color: #2a98e0; }
.za b:first-child { color: #666; }
.sorts .apply { width: 70px; height: 18px; margin-left: auto; color: #9a9a9a; border: 1px solid #c8c8c8; border-radius: 3px; background: #f0f0f0; }

.browser { flex: 1; display: flex; flex-direction: column; min-height: 0; margin-bottom: 2px; padding-left: 1px; border-top: 2px solid #bfbfbf; background: #fff; }
.search { display: flex; align-items: center; gap: 9px; height: 26px; flex: none; margin: 8px 10px 7px 8px; padding-left: 8px; border: 1px solid #dcdcdc; }
.search svg { width: 16px; height: 16px; }
.search input { flex: 1; }
.search input::placeholder { color: #a0a0a0; opacity: 1; }
.tree { color: #555; }
.tree li { position: relative; }
.row { display: flex; align-items: center; height: 20px; white-space: nowrap; }
.row svg { width: 16px; height: 16px; margin-right: 4px; }
.root { padding-left: 4px; }
.hot { background: #f0f0f0; border: 1px solid #dadada; padding-left: 3px; }
.tg { position: relative; width: 9px; height: 9px; flex: none; margin-right: 9px; }
.minus { background: linear-gradient(#777, #777) center / 9px 2px no-repeat; }
.plus { background: linear-gradient(#777, #777) center / 9px 2px no-repeat, linear-gradient(#777, #777) center / 2px 9px no-repeat; }
.tree ul > li > .row { padding-left: 20px; }
.tree ul .leafs > li > .row { padding-left: 54px; }
.tree ul > li::before { content: ""; position: absolute; left: 8px; top: 0; bottom: 0; border-left: 1px dashed #b8b8b8; }
.tree ul > li:last-child::before { bottom: auto; height: 11px; }
.tree ul > li::after { content: ""; position: absolute; left: 9px; top: 10px; width: 8px; border-top: 1px dashed #b8b8b8; }
.tree ul .leafs > li::before { left: 24px; }
.tree ul .leafs > li::after { left: 25px; width: 24px; }
.tree .leafs.near > li > .row { padding-left: 38px; }
.tree ul.leafs.near > li::before { left: 8px; }
.tree ul.leafs.near > li::after { left: 9px; width: 24px; }

/* drawing area */
.work { flex: 1; display: flex; flex-direction: column; min-width: 0; padding-bottom: 2px; background: #fff; }
.docs { display: flex; flex: none; height: 20px; background: #cbcbcb; }
.doc { width: 128px; justify-content: flex-start; gap: 8px; padding-left: 5px; background: #f39c12; color: #4a3208; }
.doc svg { width: 16px; height: 16px; }
.doc.active { border: 1px solid #fff; background: #f5a52a; color: #000; font-weight: 700; }
.doc .cl { width: 11px; height: 11px; margin: 0 3px 0 auto; }
.more { width: 8px; margin: 0 4px 0 auto; }
.more svg { width: 8px; height: 8px; }
.viewport { flex: 1; display: flex; min-height: 0; padding: 2px 0 0 2px; }
.canvas { position: relative; flex: 1; min-width: 0; overflow: hidden; background: #cdcdcd; }
.plan { width: 100%; height: 100%; }
.plan text { font-size: 6px; fill: #222; stroke: none; text-anchor: middle; }
.plan .m2 { font-size: 5px; fill: #3030a0; }
.navbar { position: absolute; top: 1px; right: 0; width: 36px; height: 116px; }
.navbar text { font-size: 9px; font-weight: 700; fill: #5a86b4; }
.viewbar { display: flex; align-items: center; flex: none; height: 17px; margin-left: 2px; background: #f4f4f4; }
.ratio { width: 83px; height: 17px; padding-right: 2px; }
.viewicons { display: flex; gap: 10px; margin-right: 5px; }
.viewicons svg, .filters svg { width: 16px; height: 16px; }
.arrow { width: 16px; height: 17px; border-right: 1px solid #d8d8d8; }
.arrow svg { width: 11px; height: 11px; }
.track { flex: 1; height: 17px; display: flex; align-items: center; justify-content: center; background: #e8e8e8; }
.track i { width: 17px; height: 5px; border-radius: 2px; background: #d0d0d0; }
.grip { width: 17px; height: 17px; }

/* status bar */
footer { display: flex; align-items: center; height: 24px; flex: none; background: #f4f4f4; }
footer svg { width: 16px; height: 16px; }
.msg { width: 825px; padding: 0 0 0 1px; }
.chev { margin-left: 200px; width: 12px; }
.chev svg, .model svg { width: 9px; height: 9px; }
.req { margin: 0 26px 0 10px; color: #888; gap: 1px; }
.opt { width: 16px; margin-right: 10px; }
.model { width: 201px; justify-content: space-between; color: #999; }
.filters { display: flex; gap: 10px; margin-left: auto; padding-right: 71px; }
.count { gap: 2px; }
```
